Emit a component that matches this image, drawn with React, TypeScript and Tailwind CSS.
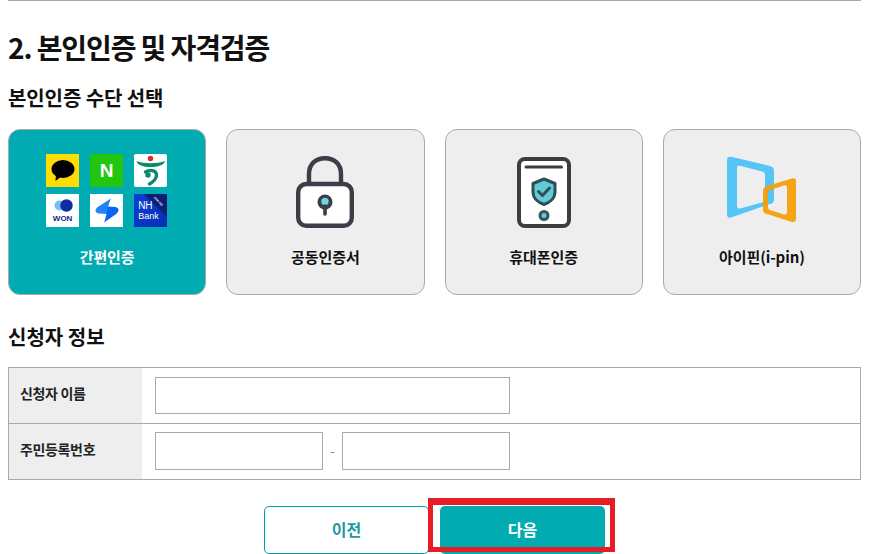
function Lock() {
  return (
    <svg width="58" height="72" viewBox="0 0 58 72" fill="none">
      <path d="M13 28V18C13 8 19.5 2.2 29 2.2S45 8 45 18V28" stroke="#3b3d47" strokeWidth="4.4" />
      <rect x="2.2" y="28" width="53.6" height="41.8" rx="8" fill="#fff" stroke="#3b3d47" strokeWidth="4.4" />
      <circle cx="29" cy="46" r="7.5" fill="#3b3d47" />
      <circle cx="29" cy="45.5" r="3.7" fill="#6fd6dc" />
      <path d="M29 50V58" stroke="#3b3d47" strokeWidth="3.6" strokeLinecap="round" />
    </svg>
  );
}

function Phone() {
  return (
    <svg width="54" height="71" viewBox="0 0 54 71" fill="none">
      <rect x="2" y="2" width="50" height="67" rx="6" fill="#fff" stroke="#3b3d40" strokeWidth="4" />
      <path d="M9 10H44.5" stroke="#3b3d40" strokeWidth="3" strokeLinecap="round" />
      <path d="M27 22L38 26.5V35C38 41 33 45.5 27 47.5C21 45.5 16 41 16 35V26.5Z" fill="#63cbd3" stroke="#2f4f58" strokeWidth="3" strokeLinejoin="round" />
      <path d="M21.5 34.5L25.5 38.5L32.5 31" stroke="#2f4f58" strokeWidth="3" strokeLinecap="round" strokeLinejoin="round" />
      <circle cx="27" cy="58.5" r="4" fill="#63cbd3" stroke="#35555c" strokeWidth="3" />
    </svg>
  );
}

function Ipin() {
  return (
    <svg width="69" height="67" viewBox="0 0 69 67" className="mb-[5px]">
      <path fillRule="evenodd" fill="#55c5f5" d="M0 4Q0 0 4 0.8L43 10Q47 11 47 15V44Q47 47 43 48L4 61.5Q0 62.5 0 58ZM10 12Q10 9 13 9.7L35 15.5Q38 16.3 38 19V43Q38 46 35 46.6L13 52.5Q10 53 10 50Z" />
      <path fillRule="evenodd" fill="#f59e0b" opacity="0.95" d="M36 35Q36 31 40 30L65 22.5Q69 21.5 69 25V63Q69 66.5 65 66L40 58Q36 57 36 54ZM41 37Q41 34.5 43 34L57 29.5Q60 28.7 60 31V56.5Q60 59 57 58.5L43 54Q41 53.5 41 51Z" />
    </svg>
  );
}

function Kakao() {
  return (
    <div className="flex h-[33px] w-[33px] items-center justify-center bg-[#ffdd00]">
      <svg width="24" height="21" viewBox="0 0 24 21">
        <ellipse cx="12" cy="9" rx="11.5" ry="9" fill="#000" />
        <path d="M5 14L4.5 21L11 16Z" fill="#000" />
      </svg>
    </div>
  );
}

function Naver() {
  return (
    <div className="flex h-[33px] w-[33px] items-center justify-center bg-[#22c60f] text-[19px] leading-none font-black text-white [font-family:'Liberation_Sans',sans-serif]">
      N
    </div>
  );
}

function Hana() {
  return (
    <div className="flex h-[33px] w-[33px] items-center justify-center rounded-[2px] bg-white">
      <svg width="33" height="33" viewBox="0 0 33 33" fill="none">
        <circle cx="16.5" cy="4.5" r="2.7" fill="#e2262a" />
        <path d="M2.5 7C10 10 23 10 31 7C30 11 24 13 16.5 13C9 13 3.5 11 2.5 7Z" fill="#0b8a6c" />
        <circle cx="14" cy="21" r="2.7" fill="#0b8a6c" />
        <path d="M11.5 18C15 16 22 15.5 22.5 20.5C22.8 24.5 19 28 15.5 30" stroke="#0b8a6c" strokeWidth="3.4" strokeLinecap="round" />
      </svg>
    </div>
  );
}

function Won() {
  return (
    <div className="flex h-[33px] w-[33px] flex-col items-center bg-white pt-[5px]">
      <svg width="20" height="13" viewBox="0 0 20 13">
        <circle cx="6.5" cy="6.5" r="5" fill="#6fc3ee" />
        <circle cx="13.5" cy="6.5" r="6.2" fill="#0f2fa0" />
      </svg>
      <span className="mt-[2px] text-[8px] leading-[9px] font-black text-[#14277e] [font-family:'Liberation_Sans',sans-serif]">WON</span>
    </div>
  );
}

function Toss() {
  return (
    <div className="flex h-[33px] w-[33px] items-center justify-center bg-white">
      <svg width="24" height="25" viewBox="0 0 24 25">
        <path d="M16 0.5L3.5 8.5C-0.5 11 -0.5 14.5 3.5 15.5L12 16C12.5 10 14 5 16 0.5Z" fill="#1e86f7" />
        <path d="M9 24.5L20.5 16.5C24.5 13.5 24.5 10 20.5 9L12.5 8.5C12 14 11 19.5 9 24.5Z" fill="#0a63f2" />
      </svg>
    </div>
  );
}

function Nh() {
  return (
    <div className="relative flex h-[33px] w-[33px] flex-col justify-end overflow-hidden bg-gradient-to-br from-[#0a3fd6] to-[#0a2db5] pb-[6px] pl-[4px] text-white [font-family:'Liberation_Sans',sans-serif]">
      <div className="absolute -top-[9px] -right-[14px] h-[20px] w-[44px] rotate-45 bg-[#0c1f78]" />
      <span className="relative text-[10px] leading-[10px]">NH</span>
      <span className="relative text-[9px] leading-[10px]">Bank</span>
      <span className="absolute top-[6px] right-[3px] rotate-45 text-[3.5px] leading-none font-bold">one-up</span>
    </div>
  );
}

function Card({ label, active, children }: { label: string; active?: boolean; children: React.ReactNode }) {
  return (
    <div className={`flex h-[166px] flex-col items-center rounded-[12px] border border-[#aaaaaa] ${active ? "bg-[#00abb2] text-white" : "bg-[#eeeeee] text-[#111111]"}`}>
      <div className="flex h-[98px] w-full items-end justify-center">{children}</div>
      <div className="mt-[18px] text-[15px] leading-[22px] font-bold tracking-[-0.1px]">{label}</div>
    </div>
  );
}

function Field({ w, h }: { w: string; h: string }) {
  return <div className={`border border-[#aaaaaa] bg-white ${w} ${h}`} />;
}

function Row({ label, top, children }: { label: string; top?: boolean; children: React.ReactNode }) {
  return (
    <div className={`flex ${top ? "h-[56px] border-t border-[#aaaaaa]" : "h-[55px]"}`}>
      <div className="flex w-[133px] items-center bg-[#eeeeee] pb-[4px] pl-[11px] text-[14px] font-bold tracking-[-0.35px] text-[#222222]">{label}</div>
      <div className={`flex items-center pl-[13px] ${top ? "pb-[1px]" : ""}`}>{children}</div>
    </div>
  );
}

export default function App() {
  return (
    <div className="relative h-[554px] w-[883px] overflow-hidden bg-white px-[8px] [font-family:'Noto_Sans_CJK_KR','Noto_Sans',sans-serif]">
      <div className="w-[853px] border-t border-[#aaaaaa]" />
      <h1 className="mt-[26px] text-[28px] leading-[40px] font-bold tracking-[-1.1px] text-[#111111]">2. 본인인증 및 자격검증</h1>
      <h2 className="mt-[16px] text-[20px] leading-[30px] font-bold tracking-[-0.1px] text-[#111111]">본인인증 수단 선택</h2>
      <div className="mt-[16px] grid w-[853px] grid-cols-4 gap-x-[20px]">
        <Card label="간편인증" active>
          <div className="mr-[1px] grid grid-cols-[33px_33px_33px] gap-x-[11px] gap-y-[7px] pb-[1px]">
            <Kakao />
            <Naver />
            <Hana />
            <Won />
            <Toss />
            <Nh />
          </div>
        </Card>
        <Card label="공동인증서">
          <Lock />
        </Card>
        <Card label="휴대폰인증">
          <Phone />
        </Card>
        <Card label="아이핀(i-pin)">
          <Ipin />
        </Card>
      </div>
      <h2 className="mt-[27px] text-[20px] leading-[30px] font-bold tracking-[0px] text-[#111111]">신청자 정보</h2>
      <div className="mt-[15px] w-[853px] border border-[#aaaaaa]">
        <Row label="신청자 이름">
          <Field w="w-[355px]" h="h-[37px]" />
        </Row>
        <Row label="주민등록번호" top>
          <Field w="w-[168px]" h="h-[38px]" />
          <span className="w-[19px] text-center text-[13px] text-[#888888]">-</span>
          <Field w="w-[168px]" h="h-[38px]" />
        </Row>
      </div>
      <div className="mt-[26px] flex justify-center gap-[11px] pr-[14px]">
        <div className="flex h-[48px] w-[165px] items-center justify-center rounded-[5px] border border-[#00a0a6] bg-white pb-[3px] text-[16px] font-bold text-[#1d9aa0]">이전</div>
        <div className="flex h-[48px] w-[165px] items-center justify-center rounded-[5px] bg-[#00abb2] pb-[3px] text-[16px] font-bold text-white">다음</div>
      </div>
      <div className="absolute top-[498px] left-[428px] h-[54px] w-[187px] border-x-[5px] border-t-[7px] border-b-[5px] border-[#e71d25]" />
    </div>
  );
}
